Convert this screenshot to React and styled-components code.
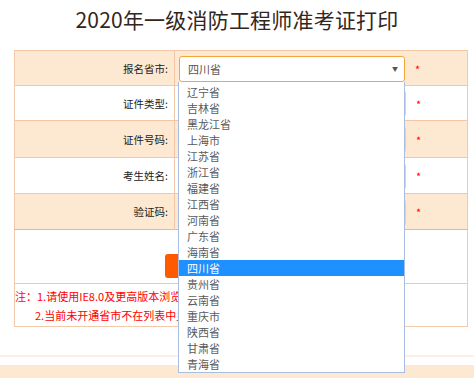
import React from 'react'
import styled, { createGlobalStyle } from 'styled-components'

const provinces = [
    '辽宁省', '吉林省', '黑龙江省', '上海市', '江苏省', '浙江省',
    '福建省', '江西省', '河南省', '广东省', '海南省', '四川省',
    '贵州省', '云南省', '重庆市', '陕西省', '甘肃省', '青海省'
]

const fields = [
    { label: '证件类型:', height: 35, shade: false },
    { label: '证件号码:', height: 37, shade: true },
    { label: '考生姓名:', height: 36, shade: false },
    { label: '验证码:', height: 36, shade: true }
]

const App = () => {
    return (
        <Page>
            <GlobalStyle />
            <Title>2020年一级消防工程师准考证打印</Title>

            <FormTable>
                <tbody>
                    <Row $shade $height={35}>
                        <LabelCell>报名省市:</LabelCell>
                        <FieldCell>
                            <SelectWrap>
                                <SelectBox>
                                    四川省
                                    <Arrow>▼</Arrow>
                                </SelectBox>
                                <Dropdown>
                                    {provinces.map(p =>
                                        <Option key={p} $active={p === '四川省'}>{p}</Option>
                                    )}
                                </Dropdown>
                            </SelectWrap>
                            <Star>*</Star>
                        </FieldCell>
                    </Row>

                    {fields.map(f =>
                        <Row key={f.label} $shade={f.shade} $height={f.height}>
                            <LabelCell>{f.label}</LabelCell>
                            <FieldCell>
                                <Input />
                                <Star>*</Star>
                            </FieldCell>
                        </Row>
                    )}

                    <Row $height={53} $strong>
                        <ButtonCell colSpan={2}>
                            <PrintButton>打印准考证</PrintButton>
                        </ButtonCell>
                    </Row>

                    <Row $height={43}>
                        <NoteCell colSpan={2}>
                            <Note>注：1.请使用IE8.0及更高版本浏览器；</Note>
                            <Note $indent>2.当前未开通省市不在列表中显示。</Note>
                        </NoteCell>
                    </Row>
                </tbody>
            </FormTable>

            <FooterRule />
            <Footer />
        </Page>
    )
}

const GlobalStyle = createGlobalStyle`
    html, body {
        margin: 0;
        padding: 0;
        background: #fff;
        font-family: "Noto Sans CJK SC", "Liberation Sans", sans-serif;
    }
`

const Page = styled.div`
    width: 474px;
    height: 378px;
    overflow: hidden;
    display: flex;
    flex-direction: column;
`

const Title = styled.h1`
    margin: 0;
    height: 50px;
    line-height: 38px;
    font-size: 21px;
    font-weight: normal;
    color: #33261e;
    text-align: center;
    letter-spacing: 0.2px;
`

const FormTable = styled.table`
    margin-left: 14px;
    width: 454px;
    border-collapse: collapse;
    border: 1px solid #f3c9ab;
    table-layout: fixed;
`

const Row = styled.tr`
    height: ${p => p.$height}px;
    background: ${p => p.$shade ? '#fde9d1' : '#fff'};

    td {
        border-top: 1px solid ${p => p.$strong ? '#f1b58c' : '#f3c6a6'};
    }
`

const LabelCell = styled.td`
    width: 153px;
    padding: 0 6px 0 0;
    text-align: right;
    font-size: 10.5px;
    color: #222;
    border-right: 1px solid #f3c6a6;
`

const FieldCell = styled.td`
    padding: 0 0 0 4px;
    white-space: nowrap;
`

const SelectWrap = styled.div`
    position: relative;
    display: inline-block;
    vertical-align: middle;
`

const SelectBox = styled.div`
    box-sizing: border-box;
    width: 226px;
    height: 26px;
    border: 1px solid #f3a73b;
    border-radius: 3px;
    background: #fff;
    padding-left: 8px;
    line-height: 24px;
    font-size: 11px;
    color: #555;
    position: relative;
`

const Arrow = styled.span`
    position: absolute;
    right: 6px;
    top: 0;
    font-size: 6px;
    color: #555;
`

const Dropdown = styled.div`
    position: absolute;
    top: 26px;
    left: -1px;
    z-index: 10;
    box-sizing: border-box;
    width: 227px;
    padding-top: 2px;
    background: #fff;
    border: 1px solid #a9bde0;
    border-top: none;
`

const Option = styled.div`
    height: 16px;
    line-height: 16px;
    padding-left: 8px;
    font-size: 11px;
    color: ${p => p.$active ? '#fff' : '#5a5a5a'};
    background: ${p => p.$active ? '#1e90ff' : 'transparent'};
`

const Input = styled.input`
    box-sizing: border-box;
    width: 227px;
    height: 27px;
    border: 1px solid #d3d3d3;
    border-radius: 3px;
    vertical-align: middle;
`

const Star = styled.span`
    display: inline-block;
    margin-left: 10px;
    vertical-align: middle;
    color: #f00;
    font-size: 11px;
`

const ButtonCell = styled.td`
    padding: 22px 0 5px;
    text-align: center;
    vertical-align: top;
`

const PrintButton = styled.button`
    width: 152px;
    height: 24px;
    border: none;
    border-radius: 3px;
    background: #ff5a00;
    color: #fff;
    font-family: inherit;
    font-size: 12px;
`

const NoteCell = styled.td`
    padding: 4px 0 0;
    vertical-align: top;
`

const Note = styled.div`
    height: 19px;
    line-height: 16px;
    padding-left: ${p => p.$indent ? '20px' : '0'};
    font-size: 11px;
    color: #f00;
    white-space: nowrap;
`

const FooterRule = styled.div`
    margin-top: 28px;
    height: 2px;
    background: #fcefe6;
`

const Footer = styled.div`
    margin-top: 8px;
    flex: 1;
    background: #fde9d1;
`

export default App
